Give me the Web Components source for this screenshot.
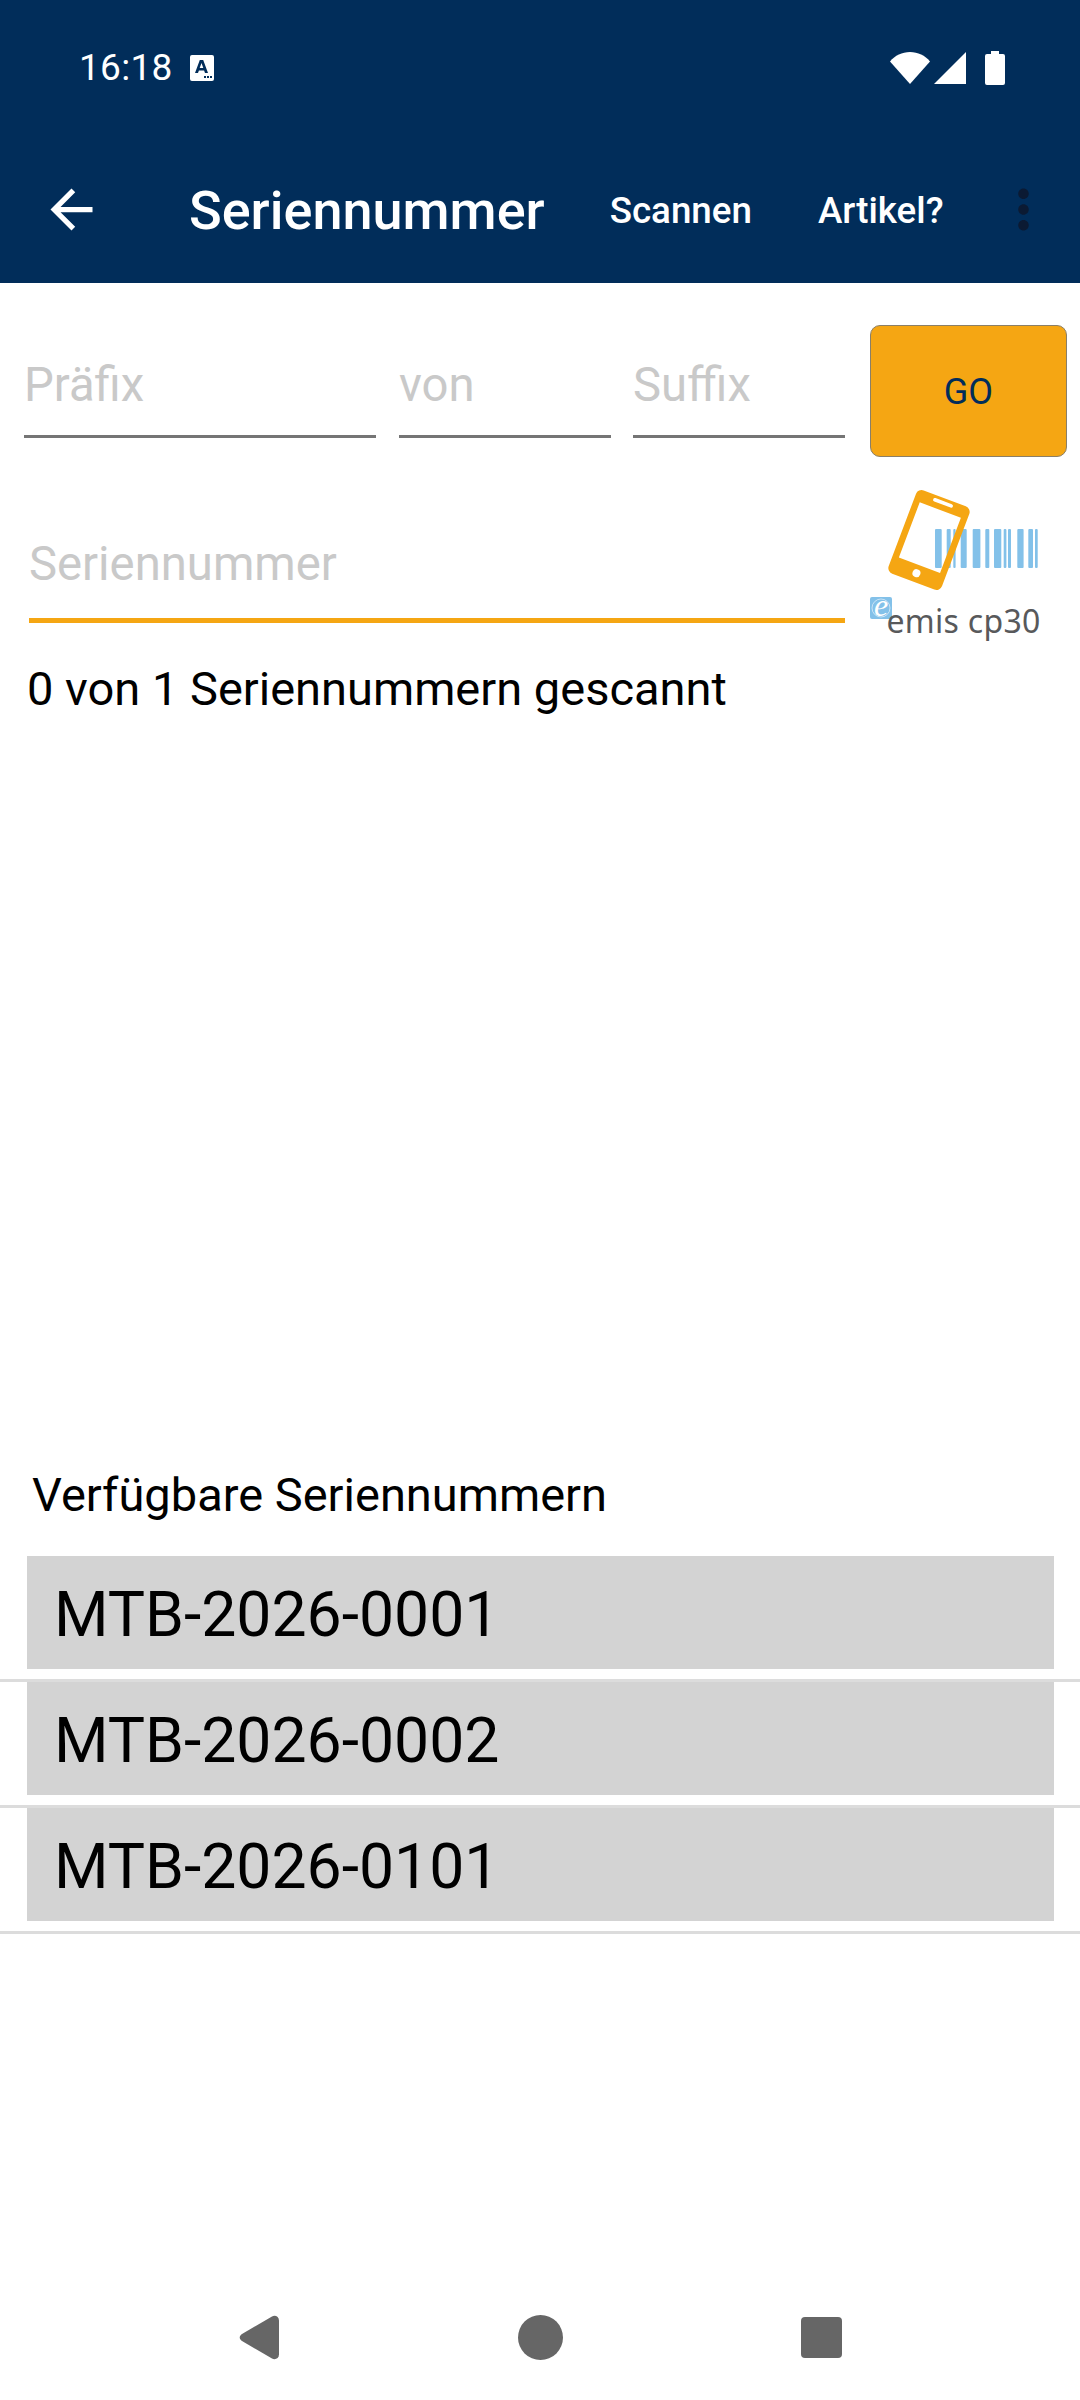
<!DOCTYPE html>
<html lang="de">
<head>
<meta charset="utf-8">
<title>Seriennummer</title>
<style>
	html, body { margin: 0; height: 100%; background: #fff; }
	body { font-family: Roboto, sans-serif; }
	scan-screen { height: 2400px; }
</style>
</head>
<body>
<scan-screen>
	<status-bar slot="top" time="16:18"></status-bar>
	<app-bar slot="top" heading="Seriennummer"></app-bar>
	<range-form></range-form>
	<scan-field placeholder="Seriennummer"></scan-field>
	<scan-count>0 von 1 Seriennummern gescannt</scan-count>
	<serial-list slot="bottom" heading="Verfügbare Seriennummern">
		<serial-row>MTB-2026-0001</serial-row>
		<serial-row>MTB-2026-0002</serial-row>
		<serial-row>MTB-2026-0101</serial-row>
	</serial-list>
	<nav-bar slot="nav"></nav-bar>
</scan-screen>

<script>
(function ()
{
	function define( name, markup, setup )
	{
		customElements.define( name, class extends HTMLElement
		{
			constructor()
			{
				super();
				this.attachShadow({ mode: 'open' }).innerHTML = markup;
			}

			connectedCallback()
			{
				if( setup ) setup( this, this.shadowRoot );
			}
		});
	}

	define( 'scan-screen',
	`
	<style>
		:host { display: flex; flex-direction: column; width: 1080px; }
		main { display: block; }
		.bottom { margin-top: auto; }
	</style>
	<slot name="top"></slot>
	<main><slot></slot></main>
	<div class="bottom"><slot name="bottom"></slot></div>
	<slot name="nav"></slot>
	`);

	define( 'status-bar',
	`
	<style>
		:host { display: flex; align-items: center; height: 136px; padding: 0 75px 0 79px; box-sizing: border-box; background: #012d5a; color: #fff; }
		.time { font-size: 37px; line-height: 136px; letter-spacing: .3px; }
		.notif { margin-left: 17px; width: 24px; height: 26px; }
		.right { margin-left: auto; display: flex; gap: 4px; align-items: center; }
		svg { display: block; }
	</style>
	<span class="time"></span>
	<svg class="notif" viewBox="0 0 24 26">
		<path fill="#fff" fill-rule="evenodd" d="M2 0h20a2 2 0 0 1 2 2v22a2 2 0 0 1-2 2H2a2 2 0 0 1-2-2V2a2 2 0 0 1 2-2zM9.800 5 5 18h3l.9-2.600h5.200L15 18h3L13.200 5zM11.500 8l1.800 5H9.700zM14 21h2v2h-2zM17 21h2v2h-2zM20 21h2v2h-2z"/>
	</svg>
	<div class="right">
		<svg width="40" height="32" viewBox="0 0 40 32"><path fill="#fff" d="M0 9.500C5 3.500 12 0 20 0s15 3.500 20 9.500L20 32z"/></svg>
		<svg width="32" height="32" viewBox="0 0 32 32" style="margin-right:15px"><path fill="#fff" d="M32 0v32H0z"/></svg>
		<svg width="20" height="34" viewBox="0 0 20 34"><path fill="#fff" d="M6 0h8v3h4a2 2 0 0 1 2 2v27a2 2 0 0 1-2 2H2a2 2 0 0 1-2-2V5a2 2 0 0 1 2-2h4z"/></svg>
	</div>
	`, ( el, root ) => { root.querySelector( '.time' ).textContent = el.getAttribute( 'time' ); });

	define( 'app-bar',
	`
	<style>
		:host { display: flex; align-items: center; height: 147px; background: #012d5a; color: #fff; font-weight: 500; padding-left: 40px; box-sizing: border-box; }
		svg { display: block; flex: none; }
		h1 { margin: 2px 0 0 86px; font: 500 54px/1 Roboto, sans-serif; }
		.action { font-size: 36.750px; line-height: 1; padding-top: 4px; }
		.a1 { margin-left: 65px; }
		.a2 { margin-left: 66px; }
		.more { margin-left: 48px; }
	</style>
	<svg width="63" height="63" viewBox="0 0 24 24"><path fill="#fff" d="M20 11H7.830l5.590-5.590L12 4l-8 8 8 8 1.410-1.410L7.830 13H20v-2z"/></svg>
	<h1></h1>
	<span class="action a1">Scannen</span>
	<span class="action a2">Artikel?</span>
	<svg class="more" width="63" height="63" viewBox="0 0 24 24"><path fill="#0b1a33" d="M12 8c1.100 0 2-.9 2-2s-.9-2-2-2-2 .9-2 2 .9 2 2 2zm0 2c-1.100 0-2 .9-2 2s.9 2 2 2 2-.9 2-2-.9-2-2-2zm0 6c-1.100 0-2 .9-2 2s.9 2 2 2 2-.9 2-2-.9-2-2-2z"/></svg>
	`, ( el, root ) => { root.querySelector( 'h1' ).textContent = el.getAttribute( 'heading' ); });

	define( 'text-line',
	`
	<style>
		:host { display: flex; align-items: flex-end; height: 76px; border-bottom: 3px solid #757575; font-size: 47.250px; color: #c9c9c9; padding: 0 0 26px; line-height: 1; }
	</style>
	<slot></slot>
	`);

	define( 'go-button',
	`
	<style>
		:host { display: flex; align-items: center; justify-content: center; box-sizing: border-box; width: 197px; height: 132px; padding-top: 2px; background: #f5a613; border: 1px solid #8a7f68; border-radius: 10px; color: #012d5a; font-size: 36px; }
	</style>
	<slot></slot>
	`);

	define( 'range-form',
	`
	<style>
		:host { display: flex; align-items: flex-start; padding: 42px 13px 0 24px; }
		text-line { flex: none; margin-top: 8px; }
		go-button { margin-left: auto; }
	</style>
	<text-line style="width:352px">Präfix</text-line>
	<text-line style="width:212px;margin-left:23px">von</text-line>
	<text-line style="width:212px;margin-left:22px">Suffix</text-line>
	<go-button>GO</go-button>
	`);

	define( 'emis-logo',
	`
	<style>
		:host { display: block; width: 180px; height: 120px; }
		svg { display: block; overflow: visible; }
	</style>
	<svg width="180" height="120" viewBox="0 0 180 120">
		<g fill="#83c1e9">
			<rect x="65" y="39" width="6.700" height="39" rx="1"/>
			<rect x="76.700" y="39" width="4" height="39" rx="1"/>
			<rect x="83.300" y="39" width="2.300" height="39" rx="1"/>
			<rect x="90.700" y="39" width="6" height="39" rx="1"/>
			<rect x="102.700" y="39" width="7.700" height="39" rx="1"/>
			<rect x="115.300" y="39" width="4" height="39" rx="1"/>
			<rect x="124" y="39" width="7.300" height="39" rx="1"/>
			<rect x="133.700" y="39" width="2.700" height="39" rx="1"/>
			<rect x="138" y="39" width="3" height="39" rx="1"/>
			<rect x="147.300" y="39" width="6.300" height="39" rx="1"/>
			<rect x="158.300" y="39" width="4.700" height="39" rx="1"/>
			<rect x="165" y="39" width="2.700" height="39" rx="1"/>
		</g>
		<g transform="translate(59 50) rotate(20.700)">
			<path fill="#f5a613" fill-rule="evenodd" d="M-22.500-44.500h45a6 6 0 0 1 6 6v77a6 6 0 0 1-6 6h-45a6 6 0 0 1-6-6v-77a6 6 0 0 1 6-6zM-22-32v59h44v-59z"/>
			<rect x="-10.500" y="-41.500" width="21" height="3.600" rx="1.800" fill="#fff"/>
			<circle cx="0" cy="35.500" r="4" fill="#fff"/>
		</g>
		<rect x="0" y="107" width="22" height="22" rx="2" fill="#83c1e9"/>
		<circle cx="11" cy="118" r="9" fill="none" stroke="#fff" stroke-width=".8" opacity=".7"/>
		<text x="11" y="126" text-anchor="middle" font-family="'Liberation Serif', serif" font-style="italic" font-size="32" fill="#fff">e</text>
		<text x="16.500" y="143" font-family="'Noto Sans', sans-serif" font-size="32" letter-spacing=".3" fill="#58595b">emis cp30</text>
	</svg>
	`);

	define( 'scan-field',
	`
	<style>
		:host { display: grid; grid-template-columns: 816px 180px; padding: 0 0 0 29px; column-gap: 25px; align-items: start; }
		.field { height: 106px; padding-top: 6px; margin-top: 49px; border-bottom: 5px solid #f5a613; font-size: 47.250px; line-height: 1; color: #c9c9c9; display: flex; align-items: center; }
		emis-logo { margin-top: 33px; }
	</style>
	<div class="field"></div>
	<emis-logo></emis-logo>
	`, ( el, root ) => { root.querySelector( '.field' ).textContent = el.getAttribute( 'placeholder' ); });

	define( 'scan-count',
	`
	<style>
		:host { display: block; margin-top: 38px; padding-left: 27px; font-size: 47px; line-height: 56px; color: #000; }
	</style>
	<slot></slot>
	`);

	define( 'serial-row',
	`
	<style>
		:host { display: block; padding: 0 26px 10px 27px; border-bottom: 3px solid #dcdcdc; }
		div { height: 113px; box-sizing: border-box; padding-left: 27px; background: #d3d3d3; color: #000; font-size: 62.500px; line-height: 118px; }
	</style>
	<div><slot></slot></div>
	`);

	define( 'serial-list',
	`
	<style>
		:host { display: block; }
		h2 { margin: 0 0 33px 32px; font: 400 47px/56px Roboto, sans-serif; color: #000; }
		.rows { margin-bottom: 350px; }
	</style>
	<h2></h2>
	<div class="rows"><slot></slot></div>
	`, ( el, root ) => { root.querySelector( 'h2' ).textContent = el.getAttribute( 'heading' ); });

	define( 'nav-bar',
	`
	<style>
		:host { display: flex; justify-content: center; align-items: center; gap: 238px; height: 116px; padding-bottom: 10px; box-sizing: border-box; }
		svg { display: block; fill: #666; }
	</style>
	<svg width="41" height="45" viewBox="0 0 41 45"><path d="M3 19 33 1.500c3-1.700 7 0 7 4v34c0 4-4 5.700-7 4L3 26c-3-2-3-5 0-7z"/></svg>
	<svg width="45" height="45" viewBox="0 0 45 45"><circle cx="22.500" cy="22.500" r="22.500"/></svg>
	<svg width="41" height="41" viewBox="0 0 41 41"><rect width="41" height="41" rx="4"/></svg>
	`);
})();
</script>
</body>
</html>
